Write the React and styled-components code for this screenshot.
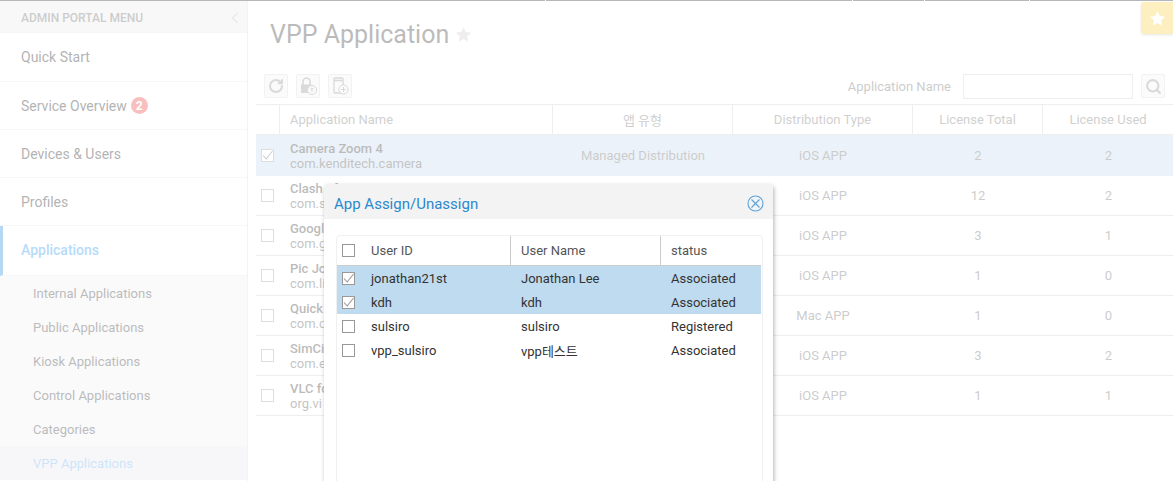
import React from "react";
import styled, { createGlobalStyle } from "styled-components";
import { RotateCw, Search } from "lucide-react";

const Global = createGlobalStyle`
  html, body { margin: 0; padding: 0; height: 100%; overflow: hidden; background: #fff; }
  body { font-family: Roboto, "Noto Sans CJK KR", sans-serif; font-size: 13px; color: #666; }
  * { box-sizing: border-box; }
`;

const Page = styled.div`
  position: relative;
  width: 1173px;
  height: 481px;
  overflow: hidden;
  display: flex;
  flex-direction: column;
`;
const TopStrip = styled.div`
  display: flex;
  gap: 1px;
  height: 1px;
  flex: none;
`;
const TopSeg = styled.div`
  width: ${(p) => p.w}px;
  background: #6a6e76;
`;
const Body = styled.div`
  flex: 1;
  display: flex;
  min-height: 0;
`;
const Sidebar = styled.nav`
  width: 248px;
  flex: none;
  border-right: 1px solid #e6e6e6;
`;
const SideHead = styled.div`
  height: 32px;
  display: flex;
  align-items: center;
  justify-content: space-between;
  padding: 3px 8px 0 21px;
  background: #f1f1f1;
  border-bottom: 1px solid #eaeaea;
  font-size: 12px;
  font-weight: 500;
  color: #999;
`;
const MenuItem = styled.div`
  height: ${(p) => p.h || 48}px;
  display: flex;
  align-items: center;
  gap: 4px;
  padding-left: ${(p) => (p.active ? 18 : 21)}px;
  padding-bottom: ${(p) => (p.active ? 2 : 0)}px;
  font-size: 14px;
  font-weight: ${(p) => (p.active ? 500 : 400)};
  color: ${(p) => (p.active ? "#6bb6f2" : "#666")};
  border-bottom: 1px solid #efefef;
  border-left: ${(p) => (p.active ? "3px solid #6bb1eb" : "0")};
`;
const Badge = styled.span`
  width: 17px;
  height: 17px;
  border-radius: 50%;
  background: #f27f7f;
  color: #fff;
  font-size: 12px;
  font-weight: 700;
  display: flex;
  align-items: center;
  justify-content: center;
`;
const SubMenu = styled.div`
  background: #f4f4f7;
`;
const SubItem = styled.div`
  height: 34px;
  display: flex;
  align-items: center;
  padding-left: 33px;
  font-size: 13px;
  color: ${(p) => (p.active ? "#9ac8f0" : "#777")};
  background: ${(p) => (p.active ? "#eeeff4" : "transparent")};
`;
const Main = styled.main`
  flex: 1;
  min-width: 0;
  padding-left: 8px;
`;
const TitleRow = styled.div`
  height: 64px;
  display: flex;
  align-items: center;
  gap: 6px;
  padding: 2px 0 0 14px;
`;
const Title = styled.h1`
  margin: 0;
  font-size: 25px;
  font-weight: 400;
  color: #777;
`;
const Toolbar = styled.div`
  height: 39px;
  display: flex;
  align-items: center;
  gap: 8px;
  padding: 3px 8px 0 8px;
`;
const IconBtn = styled.button`
  width: 24px;
  height: 24px;
  padding: 0;
  display: flex;
  align-items: center;
  justify-content: center;
  background: #f6f6f6;
  border: 1px solid #e4e4e4;
  border-radius: 2px;
  color: #b4b4b4;
`;
const SearchLabel = styled.label`
  margin-left: auto;
  margin-right: 4px;
  color: #999;
`;
const SearchInput = styled.input`
  width: 170px;
  height: 25px;
  border: 1px solid #dcdcdc;
  background: #fff;
`;
const Grid = styled.div`
  border-top: 1px solid #ddd;
`;
const Row = styled.div`
  display: grid;
  grid-template-columns: 23px 273px 180px 180px 130px 131px;
  height: ${(p) => p.h || 40}px;
  background: ${(p) => (p.selected ? "#d7e5f3" : "transparent")};
  border-bottom: 1px solid ${(p) => (p.selected ? "#d7e5f3" : "#ddd")};
`;
const HeadCell = styled.div`
  display: flex;
  align-items: center;
  justify-content: ${(p) => (p.left ? "flex-start" : "center")};
  padding-left: ${(p) => (p.left ? 10 : 0)}px;
  color: #a0a0a0;
  border-left: ${(p) => (p.first ? "0" : "1px solid #ddd")};
`;
const Cell = styled.div`
  display: flex;
  align-items: center;
  justify-content: center;
  padding-left: 2px;
  color: #999;
`;
const CheckCell = styled.div`
  display: flex;
  align-items: center;
  justify-content: flex-end;
  padding-right: 5px;
`;
const NameCell = styled.div`
  display: flex;
  flex-direction: column;
  justify-content: center;
  padding-left: 11px;
  padding-top: ${(p) => (p.selected ? 2 : 0)}px;
  line-height: 15px;
  white-space: nowrap;
  overflow: hidden;
  color: #777;
  font-weight: 500;
`;
const BundleId = styled.span`
  color: #888;
  font-weight: 400;
`;
const Box = styled.span`
  display: block;
  width: 13px;
  height: 13px;
  flex: none;
  background: #fff;
  border: 1px solid #999;
  position: relative;
  svg { position: absolute; left: 0; top: 0; }
`;
const GridBox = styled(Box)`
  border-color: #bbb;
`;
const FavButton = styled.div`
  position: absolute;
  top: 2px;
  right: 0;
  width: 32px;
  height: 32px;
  border-radius: 3px 0 0 3px;
  background: #fddf83;
  box-shadow: 0 1px 3px rgba(0, 0, 0, 0.2);
  display: flex;
  align-items: center;
  justify-content: center;
`;
const Overlay = styled.div`
  position: absolute;
  inset: 0;
  background: rgba(255, 255, 255, 0.5);
`;
const Modal = styled.section`
  position: absolute;
  left: 324px;
  top: 184px;
  width: 449px;
  height: 420px;
  background: #fff;
  border-radius: 4px;
  box-shadow: 1px 2px 4px rgba(0, 0, 0, 0.3);
`;
const ModalHead = styled.header`
  height: 35px;
  display: flex;
  align-items: center;
  justify-content: space-between;
  padding: 3px 9px 0 10px;
  background: #f3f3f3;
  border-radius: 4px 4px 0 0;
`;
const ModalTitle = styled.h2`
  margin: 0;
  padding-top: 2px;
  font-size: 15px;
  font-weight: 400;
  color: #2a88cf;
`;
const UserTable = styled.div`
  margin: 16px 10px 0 12px;
  height: 300px;
  padding-right: 1px;
  border: 1px solid #f0f0f0;
  border-radius: 4px;
`;
const UserRow = styled.div`
  display: grid;
  grid-template-columns: 34px 139px 11px 139px 11px 1fr;
  align-items: center;
  height: ${(p) => p.h || 24}px;
  background: ${(p) => (p.selected ? "#bfdbf0" : "transparent")};
  border-bottom: ${(p) => (p.head ? "1px solid #ccc" : "0")};
  color: #333;
  white-space: nowrap;
`;
const UserHead = styled(UserRow)`
  color: #555;
`;
const BoxSlot = styled.div`
  padding-left: 5px;
`;
const Divider = styled.div`
  width: 1px;
  height: 100%;
  background: #ccc;
`;

// names are cut where the dialog covers them in the picture
const apps = [
  { name: "Camera Zoom 4", id: "com.kenditech.camera", kind: "Managed Distribution", os: "iOS APP", total: 2, used: 2, selected: true, h: 41 },
  { name: "Clash of", id: "com.s", os: "iOS APP", total: 12, used: 2 },
  { name: "Googl", id: "com.g", os: "iOS APP", total: 3, used: 1 },
  { name: "Pic Jo", id: "com.li", os: "iOS APP", total: 1, used: 0 },
  { name: "Quick", id: "com.q", os: "Mac APP", total: 1, used: 0 },
  { name: "SimCi", id: "com.e", os: "iOS APP", total: 3, used: 2 },
  { name: "VLC fo", id: "org.vi", os: "iOS APP", total: 1, used: 1 },
];

const users = [
  { id: "jonathan21st", name: "Jonathan Lee", status: "Associated", selected: true },
  { id: "kdh", name: "kdh", status: "Associated", selected: true },
  { id: "sulsiro", name: "sulsiro", status: "Registered" },
  { id: "vpp_sulsiro", name: "vpp테스트", status: "Associated" },
];

const Tick = () => (
  <svg width="11" height="11" viewBox="0 0 11 11" fill="none">
    <path d="M1 5.5 L4.2 9 L10.5 1" stroke="#999" strokeWidth="1.1" />
  </svg>
);

const StarIcon = ({ size, color }) => (
  <svg width={size} height={size} viewBox="0 0 24 24" fill={color}>
    <path d="M12 1.5l3.2 7 7.6.9-5.6 5.2 1.5 7.6L12 18.4l-6.7 3.8 1.5-7.6L1.2 9.4l7.6-.9z" />
  </svg>
);

const LockUp = () => (
  <svg width="20" height="20" viewBox="0 0 20 20" fill="none">
    <path d="M5 9V5.5a3.5 3.5 0 0 1 7 0V9" stroke="#b4b4b4" strokeWidth="1.6" />
    <rect x="3" y="8.5" width="10.5" height="8.5" fill="#b4b4b4" />
    <circle cx="14" cy="14" r="4.6" fill="#f6f6f6" stroke="#b4b4b4" />
    <path d="M14 16.3v-4.4M12.2 13.6 14 11.8l1.8 1.8" stroke="#b4b4b4" />
  </svg>
);

const PhonePlus = () => (
  <svg width="20" height="20" viewBox="0 0 20 20" fill="none">
    <rect x="4" y="2" width="9" height="15" rx="1" stroke="#b4b4b4" strokeWidth="1.3" />
    <path d="M4 4.5h9" stroke="#b4b4b4" strokeWidth="1.6" />
    <circle cx="13.5" cy="13.5" r="4.6" fill="#f6f6f6" stroke="#b4b4b4" />
    <path d="M13.5 11v5M11 13.5h5" stroke="#b4b4b4" />
  </svg>
);

const CloseIcon = () => (
  <svg width="17" height="17" viewBox="0 0 17 17" fill="none">
    <circle cx="8.5" cy="8.5" r="7.5" stroke="#5ca3da" strokeWidth="1.1" />
    <path d="M4.5 4.5l8 8M12.5 4.5l-8 8" stroke="#5ca3da" strokeWidth="1.1" />
  </svg>
);

const App = () => {
  return (
    <Page>
      <Global />
      <TopStrip>
        <TopSeg w={545} />
        <TopSeg w={306} />
        <TopSeg w={71} />
        <TopSeg w={104} />
        <TopSeg w={143} />
      </TopStrip>
      <Body>
        <Sidebar>
          <SideHead>
            ADMIN PORTAL MENU
            <svg width="8" height="12" viewBox="0 0 8 12" fill="none">
              <path d="M6.5 1 L1.5 6 L6.5 11" stroke="#bbb" strokeWidth="1" />
            </svg>
          </SideHead>
          <MenuItem h={49}>Quick Start</MenuItem>
          <MenuItem>
            Service Overview <Badge>2</Badge>
          </MenuItem>
          <MenuItem>Devices &amp; Users</MenuItem>
          <MenuItem>Profiles</MenuItem>
          <MenuItem active h={50}>Applications</MenuItem>
          <SubMenu>
            <SubItem>Internal Applications</SubItem>
            <SubItem>Public Applications</SubItem>
            <SubItem>Kiosk Applications</SubItem>
            <SubItem>Control Applications</SubItem>
            <SubItem>Categories</SubItem>
            <SubItem active>VPP Applications</SubItem>
          </SubMenu>
        </Sidebar>
        <Main>
          <TitleRow>
            <Title>VPP Application</Title>
            <StarIcon size={17} color="#dcdcdc" />
          </TitleRow>
          <Toolbar>
            <IconBtn><RotateCw size={16} strokeWidth={3} /></IconBtn>
            <IconBtn><LockUp /></IconBtn>
            <IconBtn><PhonePlus /></IconBtn>
            <SearchLabel>Application Name</SearchLabel>
            <SearchInput />
            <IconBtn><Search size={17} strokeWidth={3} /></IconBtn>
          </Toolbar>
          <Grid>
            <Row h={30}>
              <HeadCell first />
              <HeadCell left>Application Name</HeadCell>
              <HeadCell>앱 유형</HeadCell>
              <HeadCell>Distribution Type</HeadCell>
              <HeadCell>License Total</HeadCell>
              <HeadCell>License Used</HeadCell>
            </Row>
            {apps.map((a) => (
              <Row key={a.id} selected={a.selected} h={a.h}>
                <CheckCell>
                  <GridBox>{a.selected && <Tick />}</GridBox>
                </CheckCell>
                <NameCell selected={a.selected}>
                  {a.name}
                  <BundleId>{a.id}</BundleId>
                </NameCell>
                <Cell>{a.kind}</Cell>
                <Cell>{a.os}</Cell>
                <Cell>{a.total}</Cell>
                <Cell>{a.used}</Cell>
              </Row>
            ))}
          </Grid>
        </Main>
      </Body>
      <FavButton>
        <StarIcon size={17} color="#fff" />
      </FavButton>
      <Overlay />
      <Modal>
        <ModalHead>
          <ModalTitle>App Assign/Unassign</ModalTitle>
          <CloseIcon />
        </ModalHead>
        <UserTable>
          <UserHead head h={30}>
            <BoxSlot><Box /></BoxSlot>
            <span>User ID</span>
            <Divider />
            <span>User Name</span>
            <Divider />
            <span>status</span>
          </UserHead>
          {users.map((u) => (
            <UserRow key={u.id} selected={u.selected}>
              <BoxSlot><Box>{u.selected && <Tick />}</Box></BoxSlot>
              <span>{u.id}</span>
              <span />
              <span>{u.name}</span>
              <span />
              <span>{u.status}</span>
            </UserRow>
          ))}
        </UserTable>
      </Modal>
    </Page>
  );
};

export default App;
